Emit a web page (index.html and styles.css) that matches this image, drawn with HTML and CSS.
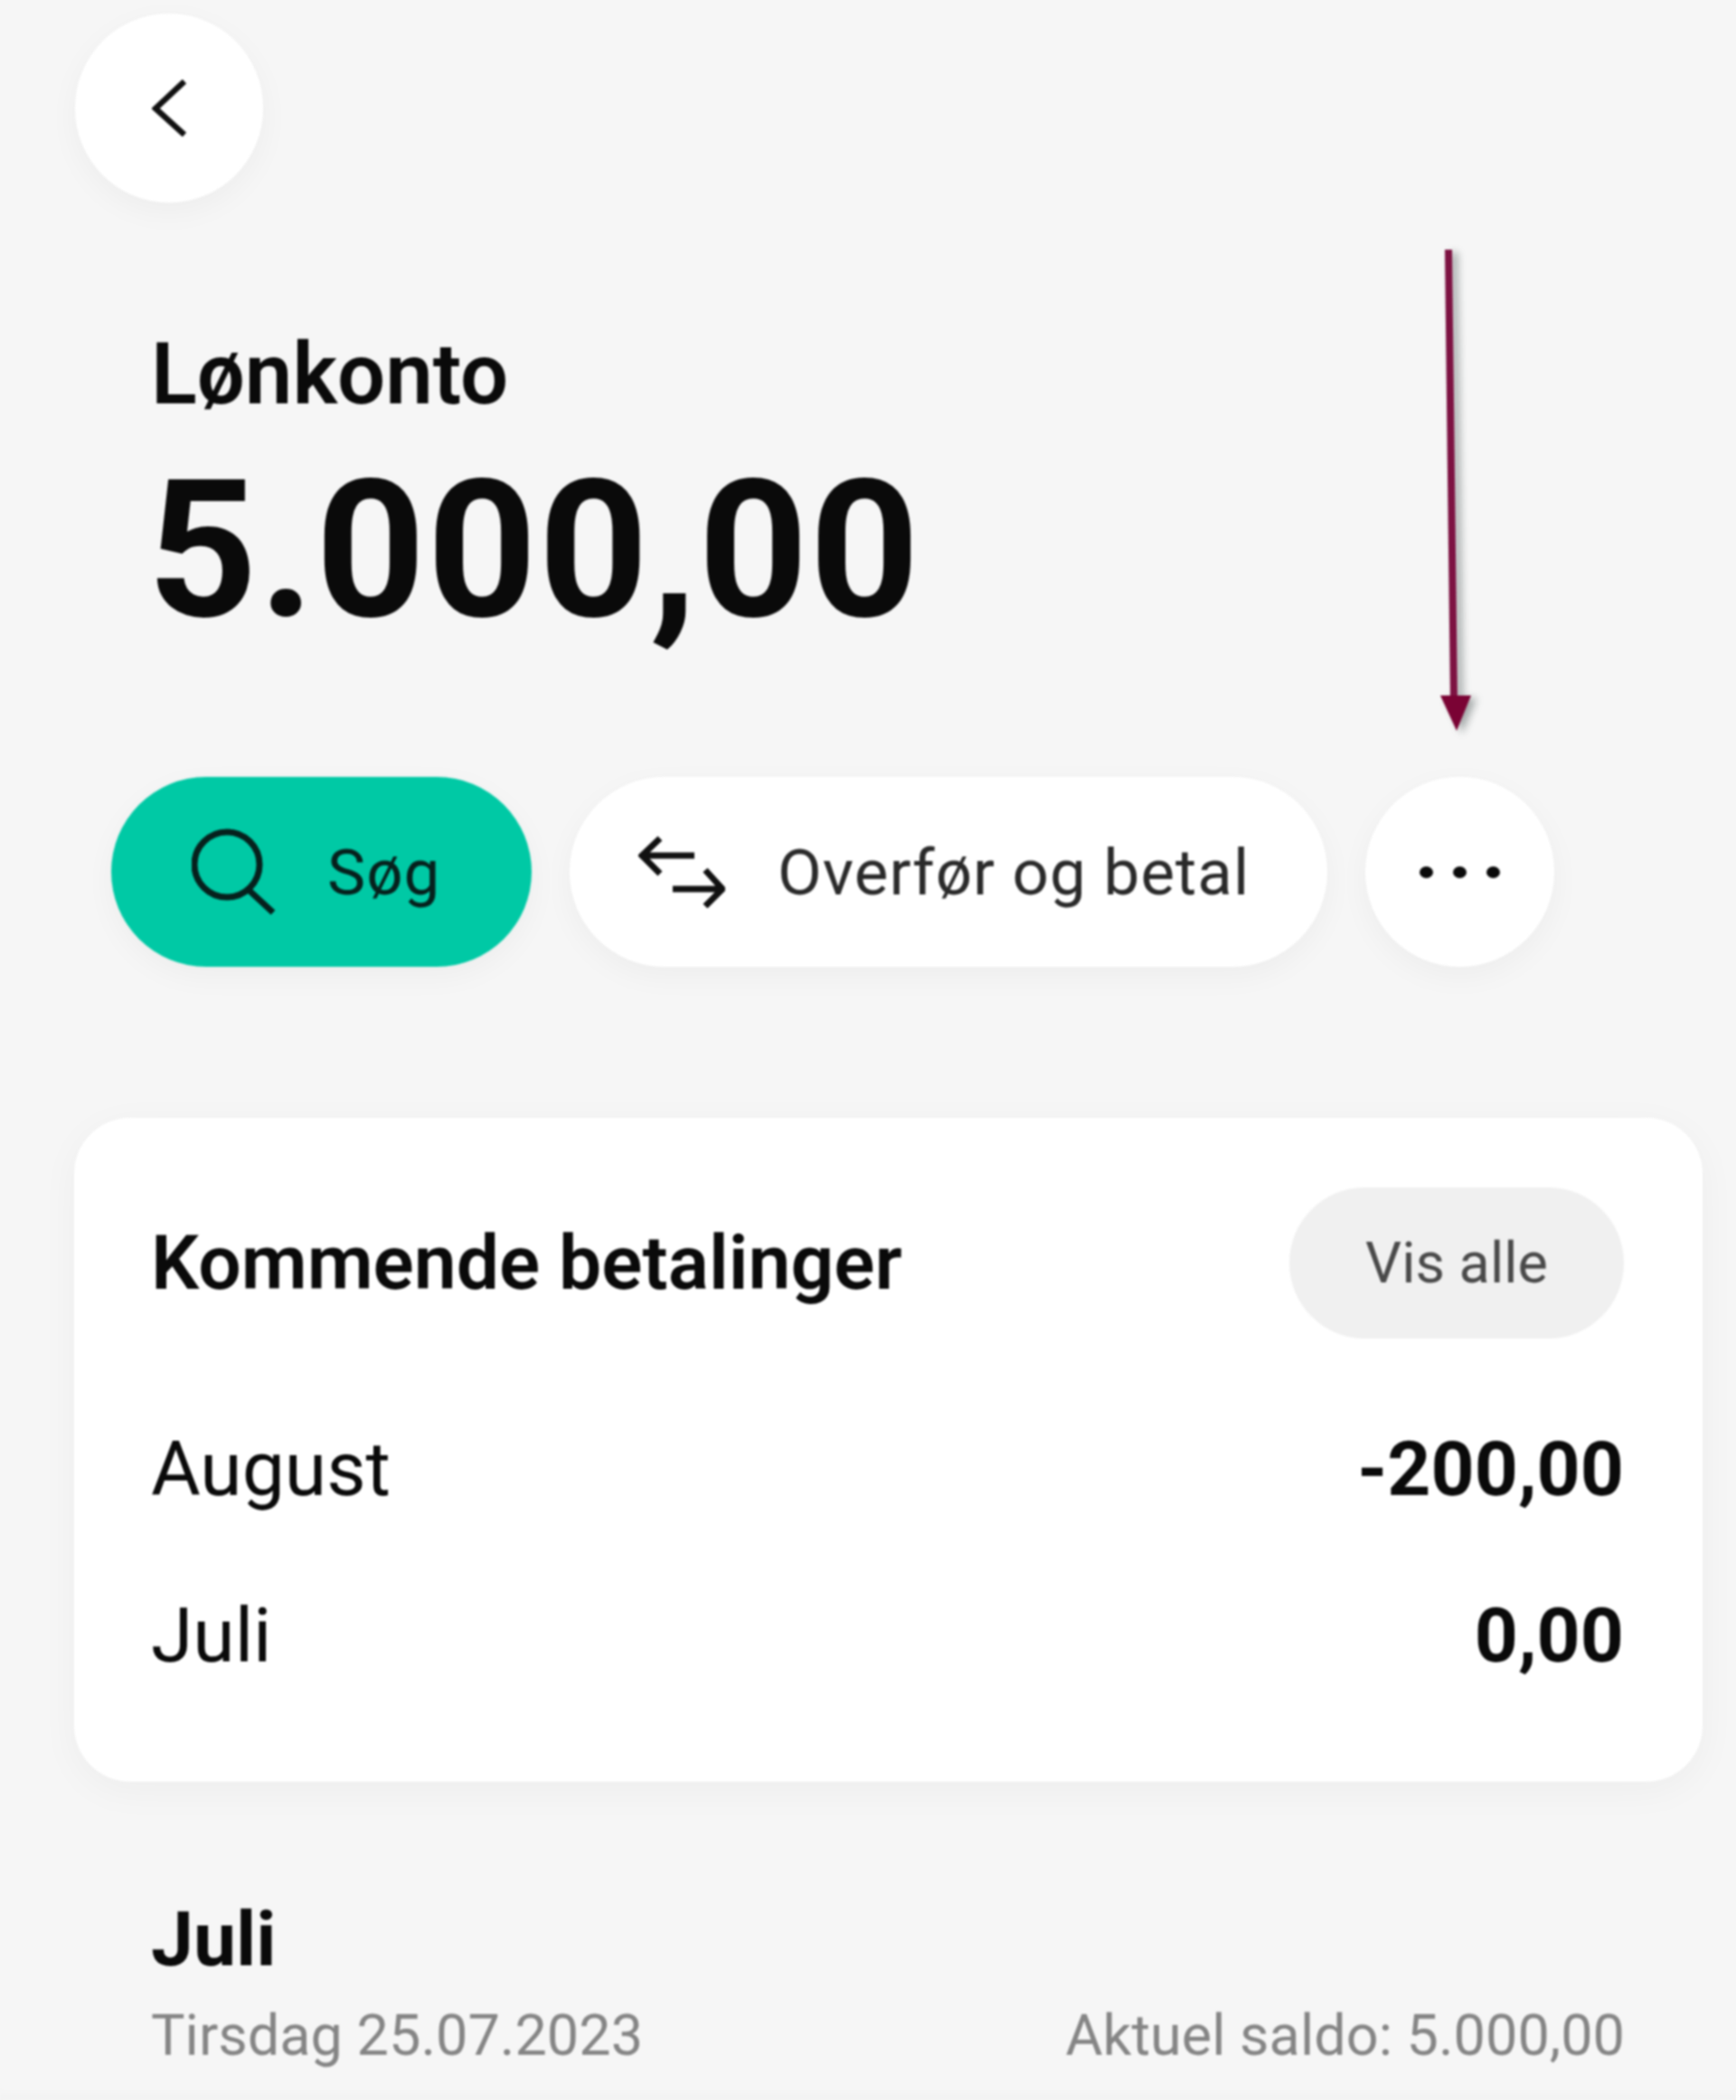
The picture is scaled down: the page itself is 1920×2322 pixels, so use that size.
FILE: index.html

```html
<!DOCTYPE html>
<html lang="da">
<head>
    <meta charset="UTF-8">
    <meta name="viewport" content="width=device-width, initial-scale=1.0">
    <title>Lønkonto</title>
    <link rel="stylesheet" href="styles.css">
</head>
<body>
    <div class="page">
        <!-- Back button -->
        <button class="round-btn back-btn" aria-label="Tilbage">
            <svg class="back-icon" viewBox="0 0 38 63" fill="none" stroke="#111" stroke-width="6.5">
                <path d="M36 2 L4 32 L36 61"/>
            </svg>
        </button>

        <!-- Account header -->
        <header class="account">
            <div class="account-name">Lønkonto</div>
            <div class="account-balance">5.000,00</div>
        </header>

        <!-- Actions -->
        <div class="actions">
            <button class="pill pill-search">
                <svg class="search-icon" viewBox="0 0 94 96" fill="none" stroke="#06211d" stroke-width="7">
                    <circle cx="39" cy="40" r="36"/>
                    <path d="M63 68 L90 93"/>
                </svg>
                <span>Søg</span>
            </button>
            <button class="pill pill-transfer">
                <svg class="swap-icon" viewBox="0 0 96 80" fill="none" stroke="#111" stroke-width="7">
                    <path d="M62 22 H4 M24 3 L4 22 L24 42"/>
                    <path d="M38 59 H93 M74 38 L93 59 L74 78"/>
                </svg>
                <span>Overfør og betal</span>
            </button>
            <button class="round-btn more-btn" aria-label="Mere">
                <span class="dot"></span><span class="dot"></span><span class="dot"></span>
            </button>
        </div>

        <!-- Arrow annotation -->
        <svg class="annotation" viewBox="0 0 50 540" fill="none">
            <path d="M10 1 L16 500" stroke="#7d1242" stroke-width="8"/>
            <path d="M1 494 H35 L19 533 Z" fill="#7a0334"/>
        </svg>

        <!-- Upcoming payments -->
        <section class="card">
            <div class="card-head">
                <h2 class="card-title">Kommende betalinger</h2>
                <button class="show-all">Vis alle</button>
            </div>
            <div class="row">
                <span>August</span>
                <span class="amount">-200,00</span>
            </div>
            <div class="row">
                <span>Juli</span>
                <span class="amount">0,00</span>
            </div>
        </section>

        <!-- Transactions -->
        <section class="month">
            <h3 class="month-title">Juli</h3>
            <div class="month-meta">
                <span>Tirsdag 25.07.2023</span>
                <span>Aktuel saldo: 5.000,00</span>
            </div>
        </section>
    </div>
</body>
</html>
```

FILE: styles.css

```css
/* Base */
html, body {
    margin: 0;
    padding: 0;
    background-color: #f6f6f6;
}

body {
    font-family: 'Roboto', 'Liberation Sans', sans-serif;
    color: #0a0a0a;
    overflow: hidden;
}

button {
    font-family: inherit;
    border: none;
    padding: 0;
    color: inherit;
}

.page {
    position: relative;
    height: 2322px;
    padding-top: 15px;
    box-sizing: border-box;
    overflow: hidden;
    box-shadow: inset 0 -12px 12px -6px rgba(0, 0, 0, 0.02); /* next card's shadow at the fold */
    filter: blur(1.2px);
}

/* Round buttons */
.round-btn {
    display: flex;
    justify-content: center;
    align-items: center;
    background-color: #fff;
    border-radius: 50%;
    box-shadow: 0 10px 34px rgba(0, 0, 0, 0.04);
}

.back-btn {
    width: 208px;
    height: 209px;
    margin-left: 83px;
}

.back-icon {
    width: 38px;
    height: 63px;
}

/* Account header */
.account {
    margin-left: 167px;
    margin-top: 140px;
}

.account-name {
    font-size: 94px;
    font-weight: 600;
    line-height: 100px;
}

.account-balance {
    font-size: 212px;
    font-weight: 700;
    letter-spacing: 1.5px;
    line-height: 230px;
    margin-top: 30px;
    margin-left: -4px;
}

/* Actions */
.actions {
    display: flex;
    gap: 42px;
    margin-left: 123px;
    margin-top: 135px;
}

.pill {
    display: flex;
    align-items: center;
    height: 210px;
    border-radius: 105px;
    font-size: 71px;
    letter-spacing: 1px;
    box-shadow: 0 10px 34px rgba(0, 0, 0, 0.04);
}

.pill-search {
    width: 465px;
    background-color: #00c9a5;
    color: #06211d;
    padding-left: 89px;
    box-sizing: border-box;
    gap: 56px;
}

.pill-transfer {
    width: 838px;
    background-color: #fff;
    color: #2a2a2a;
    padding-left: 76px;
    box-sizing: border-box;
    gap: 58px;
}

.search-icon {
    width: 94px;
    height: 96px;
}

.swap-icon {
    width: 96px;
    height: 80px;
}

.more-btn {
    width: 209px;
    height: 210px;
    gap: 22px;
}

.dot {
    width: 15px;
    height: 13px;
    background-color: #0a0a0a;
    border-radius: 50%;
}

/* Red arrow drawn on top of the screenshot */
.annotation {
    position: absolute;
    left: 1592px;
    top: 275px;
    width: 50px;
    height: 540px;
    filter: drop-shadow(6px 3px 4px rgba(60, 70, 70, 0.45));
}

/* Card */
.card {
    margin: 167px 37px 0 82px;
    height: 734px;
    box-sizing: border-box;
    padding: 77px 87px 0 85px;
    background-color: #fff;
    border-radius: 62px;
    box-shadow: 0 10px 44px rgba(0, 0, 0, 0.04);
}

.card-head {
    display: flex;
    justify-content: space-between;
    align-items: center;
    margin-bottom: 53px;
}

.card-title {
    margin: 0;
    font-size: 84px;
    font-weight: 600;
}

.show-all {
    width: 370px;
    height: 167px;
    border-radius: 84px;
    background-color: #f0f0f0;
    color: #4a4a4a;
    font-size: 63px;
}

.row {
    display: flex;
    justify-content: space-between;
    font-size: 84px;
    line-height: 184px;
}

.amount {
    font-weight: 700;
}

/* Month section */
.month {
    margin: 130px 123px 0 167px;
}

.month-title {
    margin: 0;
    font-size: 84px;
    font-weight: 700;
    line-height: 90px;
}

.month-meta {
    display: flex;
    justify-content: space-between;
    margin-top: 24px;
    font-size: 63px;
    color: #858585;
}
```
